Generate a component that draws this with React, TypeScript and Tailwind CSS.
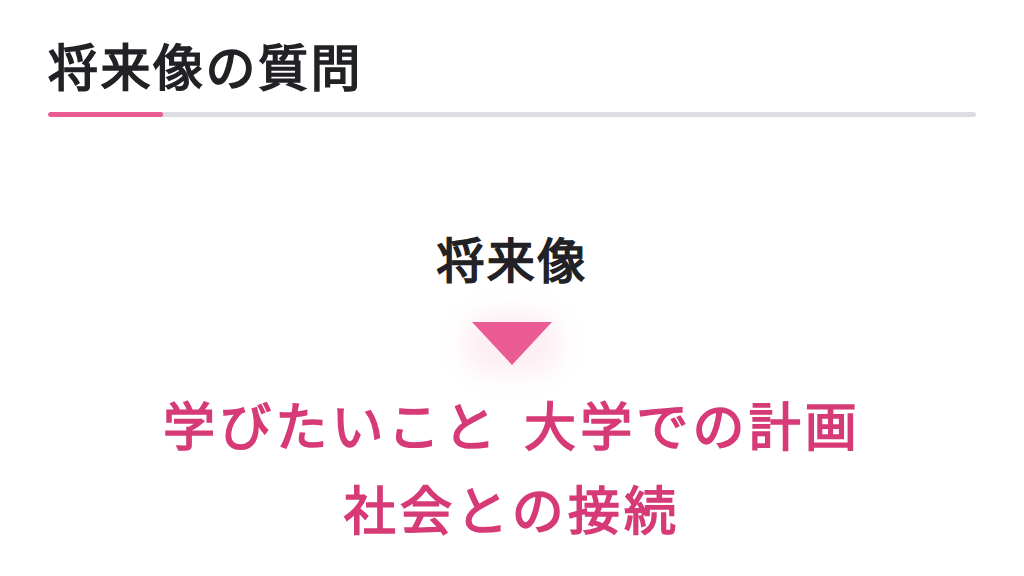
export default function App() {
  return (
    <div
      className="h-[576px] w-[1024px] overflow-hidden bg-white"
      style={{ fontFamily: '"Noto Sans CJK JP", "Noto Sans", sans-serif' }}
    >
      {/* セクション見出し */}
      <div className="px-12 pt-[32px]">
        <h2 className="text-[50px] font-normal leading-[64px] tracking-[0.05em] text-[#222226] [-webkit-text-stroke:1.7px_#222226]">
          将来像の質問
        </h2>
        <div className="mt-[16px] flex h-[5px] overflow-hidden rounded-full bg-[#dcdce2]">
          <div className="w-[115px] rounded-full bg-[#ea5b94]" />
        </div>
      </div>

      {/* 将来像 → 質問内容 */}
      <div className="mt-[110px] flex flex-col items-center">
        <p className="text-[48px] font-normal leading-[60px] tracking-[0.05em] text-[#222226] [-webkit-text-stroke:1.7px_#222226]">
          将来像
        </p>
        <div className="relative mt-[35px] h-[43px] w-[80px]">
          <div className="absolute inset-[-10px] rounded-full bg-[#ea5b94]/10 blur-[12px]" />
          <svg viewBox="0 0 80 43" className="relative h-[43px] w-[80px]">
            <polygon points="0,0 80,0 40,43" fill="#ea5b94" />
          </svg>
        </div>
        <p className="mt-[17px] text-center text-[52px] font-normal leading-[84px] tracking-[0.08em] text-[#d63a77] [-webkit-text-stroke:1.7px_#d63a77]">
          学びたいこと<span className="inline-block w-[24px]" />大学での計画
          <br />
          社会との接続
        </p>
      </div>
    </div>
  )
}
